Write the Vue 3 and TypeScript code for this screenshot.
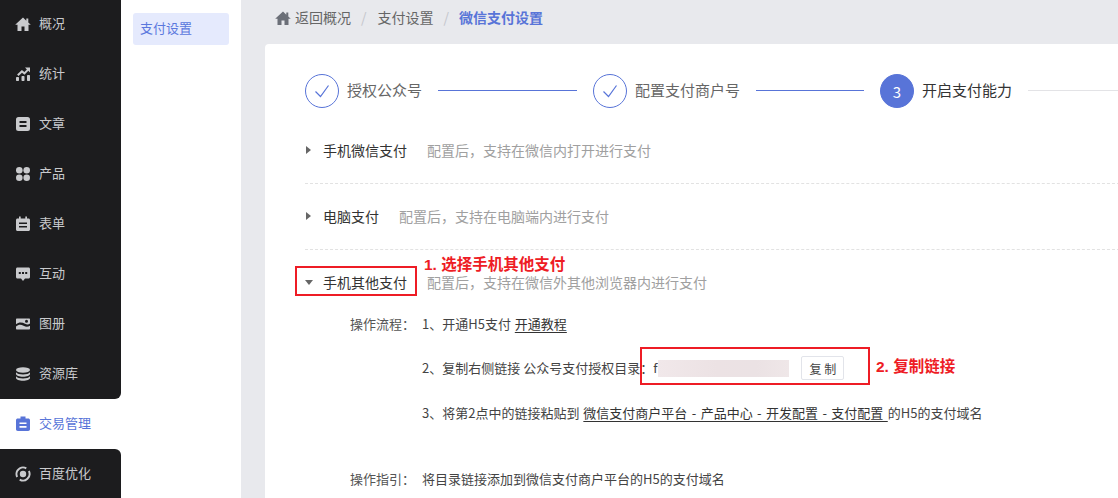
<script setup lang="ts">
interface NavItem { label: string; icon: string; active?: boolean }
const nav: NavItem[] = [
  { label: '概况', icon: 'home' },
  { label: '统计', icon: 'chart' },
  { label: '文章', icon: 'doc' },
  { label: '产品', icon: 'grid' },
  { label: '表单', icon: 'form' },
  { label: '互动', icon: 'chat' },
  { label: '图册', icon: 'image' },
  { label: '资源库', icon: 'db' },
  { label: '交易管理', icon: 'clip', active: true },
  { label: '百度优化', icon: 'baidu' },
]
const steps = [
  { label: '授权公众号', done: true, line: 139 },
  { label: '配置支付商户号', done: true, line: 108 },
  { label: '开启支付能力', done: false, line: 200 },
]
</script>

<template>
  <div class="page">
    <aside class="nav">
      <div
        v-for="item in nav"
        :key="item.label"
        class="nav-item"
        :class="{ active: item.active }"
      >
        <svg class="nav-icon" viewBox="0 0 16 16" fill="currentColor">
          <template v-if="item.icon === 'home'">
            <path d="M8 1.500 .2 8.800h2.300V15h4V10.500h3V15h4V8.800h2.300L13.300 6.500V2.500h-2v2.200z" />
          </template>
          <template v-else-if="item.icon === 'chart'">
            <path d="M10 1.500h5v5l-1.700-1.700-3.800 3.900-2.500-2-3.500 3.300-1.400-1.400 4.800-4.600 2.500 2 2.500-2.600z" />
            <rect x="1" y="11" width="3" height="4" rx=".7" />
            <rect x="6.500" y="10" width="3" height="5" rx=".7" />
            <rect x="12" y="9" width="3" height="6" rx=".7" />
          </template>
          <template v-else-if="item.icon === 'doc'">
            <path fill-rule="evenodd" d="M3.500 1h9A2.500 2.500 0 0 1 15 3.500v9a2.500 2.500 0 0 1-2.500 2.500h-9A2.500 2.500 0 0 1 1 12.500v-9A2.500 2.500 0 0 1 3.500 1zM4.500 5v2h7V5zm0 4v2h7V9z" />
          </template>
          <template v-else-if="item.icon === 'grid'">
            <circle cx="4.300" cy="4.300" r="3.300" />
            <circle cx="11.700" cy="4.300" r="3.300" />
            <circle cx="4.300" cy="11.700" r="3.300" />
            <circle cx="11.700" cy="11.700" r="3.300" />
          </template>
          <template v-else-if="item.icon === 'form'">
            <path fill-rule="evenodd" d="M4 .500h1.700V2.500h4.600V.500H12v2h1.500c.8 0 1.500.7 1.500 1.500v9.500c0 .8-.7 1.500-1.500 1.500h-11c-.8 0-1.500-.7-1.500-1.500V4c0-.8.7-1.500 1.500-1.500H4zM4 6.500V8h8V6.500zm0 3.500v1.500h8V10z" />
          </template>
          <template v-else-if="item.icon === 'chat'">
            <path fill-rule="evenodd" d="M2.500 1.500h11c.9 0 1.500.6 1.500 1.500v8c0 .9-.6 1.500-1.500 1.500H10L8 15l-2-2.500H2.500C1.600 12.500 1 11.900 1 11V3c0-.9.6-1.500 1.500-1.500zM3.800 6v2h2V6zm3.200 0v2h2V6zm3.200 0v2h2V6z" />
          </template>
          <template v-else-if="item.icon === 'image'">
            <path fill-rule="evenodd" d="M2 2.500h12c.6 0 1 .4 1 1v4c-1.500 1.300-3 1.300-5 .2-2.700-1.500-6-2-9 .5V3.500c0-.6.4-1 1-1zm9.500 1.200a1.500 1.500 0 1 0 0 3 1.500 1.500 0 0 0 0-3z" />
            <path d="M1 10.500c2.700-2.300 5-2 7.500-.7 2.500 1.400 4.500 1.300 6.500 0v2.700c0 .6-.4 1-1 1H2c-.6 0-1-.4-1-1z" />
          </template>
          <template v-else-if="item.icon === 'db'">
            <ellipse cx="8" cy="4" rx="7" ry="2.700" />
            <path d="M1 6.200c1 1.500 3.800 2.200 7 2.200s6-.7 7-2.200V8c0 1.500-3.100 2.700-7 2.700S1 9.500 1 8z" />
            <path d="M1 10.200c1 1.500 3.800 2.200 7 2.200s6-.7 7-2.200V12c0 1.500-3.100 2.700-7 2.700S1 13.500 1 12z" />
          </template>
          <template v-else-if="item.icon === 'clip'">
            <path fill-rule="evenodd" d="M5.500.500h5V2.500h2.700c1 0 1.800.7 1.800 1.700v9.100c0 1-.8 1.700-1.800 1.700H2.800c-1 0-1.800-.7-1.800-1.700V4.200c0-1 .8-1.700 1.800-1.700h2.700zM4.500 6.500V8h7V6.500zm0 3.500v1.700h7V10z" />
          </template>
          <template v-else>
            <path d="M8 .5A7.500 7.500 0 0 0 1.300 11.400l1.700-1A5.500 5.500 0 0 1 10.800 3.300l1-1.700A7.500 7.500 0 0 0 8 .5z" />
            <path d="M14.700 4.600l-1.700 1A5.500 5.500 0 0 1 5.200 12.700l-1 1.700A7.500 7.500 0 0 0 14.700 4.600z" />
            <circle cx="8" cy="8" r="3.200" />
          </template>
        </svg>
        <span class="nav-label">{{ item.label }}</span>
      </div>
    </aside>

    <aside class="sub">
      <div class="sub-item">支付设置</div>
    </aside>

    <main class="main">
      <header class="crumbs">
        <svg class="crumb-home" viewBox="0 0 16 16" fill="currentColor">
          <path d="M8 1.500 .2 8.800h2.300V15h4V10.500h3V15h4V8.800h2.300L13.300 6.500V2.500h-2v2.200z" />
        </svg>
        <span>返回概况</span>
        <i class="sep">/</i>
        <span>支付设置</span>
        <i class="sep">/</i>
        <b class="crumb-current">微信支付设置</b>
      </header>

      <section class="card">
        <div class="steps">
          <template v-for="(s, i) in steps" :key="s.label">
            <div class="circle" :class="{ current: !s.done }">
              <svg v-if="s.done" width="18" height="18" viewBox="0 0 18 18" fill="none">
                <path d="M2.500 9.500 7.500 14.500 15.500 3.500" stroke="currentColor" stroke-width="1.200" />
              </svg>
              <span v-else>{{ i + 1 }}</span>
            </div>
            <span class="step-label" :class="{ current: !s.done }">{{ s.label }}</span>
            <div class="step-line" :class="{ todo: !s.done }" :style="{ width: s.line + 'px' }"></div>
          </template>
        </div>

        <div class="pay-row dashed">
          <span class="tri right"></span>
          <span class="pay-name">手机微信支付</span>
          <span class="pay-desc">配置后，支持在微信内打开进行支付</span>
        </div>
        <div class="pay-row dashed">
          <span class="tri right"></span>
          <span class="pay-name">电脑支付</span>
          <span class="pay-desc">配置后，支持在电脑端内进行支付</span>
        </div>
        <div class="pay-row">
          <span class="tri down"></span>
          <span class="pay-name">手机其他支付</span>
          <span class="pay-desc">配置后，支持在微信外其他浏览器内进行支付</span>
          <span class="mark mark-one"></span>
          <span class="note note-one">1. 选择手机其他支付</span>
        </div>

        <div class="detail">
          <div class="detail-row first">
            <span class="detail-label">操作流程：</span>
            <span>1、开通H5支付 <u>开通教程</u></span>
          </div>
          <div class="detail-row second">
            <span class="detail-label"></span>
            <span>2、复制右侧链接 公众号支付授权目录：f</span>
            <span class="masked"></span>
            <button class="copy" type="button">复 制</button>
            <span class="mark mark-two"></span>
            <span class="note note-two">2. 复制链接</span>
          </div>
          <div class="detail-row third">
            <span class="detail-label"></span>
            <span>3、将第2点中的链接粘贴到 <u>微信支付商户平台 - 产品中心 - 开发配置 - 支付配置 </u>的H5的支付域名</span>
          </div>
          <div class="detail-row guide">
            <span class="detail-label">操作指引：</span>
            <span>将目录链接添加到微信支付商户平台的H5的支付域名</span>
          </div>
        </div>
      </section>
    </main>
  </div>
</template>

<style>
html, body { margin: 0; height: 100%; overflow: hidden; }
</style>

<style scoped>
.page {
  display: flex;
  width: 1118px;
  height: 498px;
  overflow: hidden;
  background: #e8e9ed;
  font-family: "Noto Sans CJK SC", "Liberation Sans", sans-serif;
  font-size: 13px;
  color: #444;
}
.nav {
  flex: none;
  width: 121px;
  margin-top: -1px;
  background: #fff;
}
.nav-item {
  display: flex;
  align-items: center;
  height: 50px;
  padding-left: 15px;
  box-sizing: border-box;
  background: #1c1c1e;
  color: #c9cacd;
}
.nav-item.active {
  background: #fff;
  color: #5874d8;
}
.nav-item:nth-child(8) { border-bottom-right-radius: 6px; }
.nav-item:nth-child(10) { border-top-right-radius: 6px; }
.nav-icon {
  flex: none;
  width: 16px;
  height: 16px;
  margin-right: 8px;
}
.nav-label { padding-bottom: 3px; }
.sub {
  flex: none;
  width: 120px;
  padding: 13px 12px;
  box-sizing: border-box;
  background: #fff;
}
.sub-item {
  height: 32px;
  line-height: 30px;
  padding-left: 7px;
  border-radius: 3px;
  background: #e5eafd;
  color: #5b78dd;
}
.main {
  flex: 1;
  min-width: 0;
  padding-left: 24px;
}
.crumbs {
  display: flex;
  align-items: center;
  height: 44px;
  padding: 0 0 11px 10px;
  box-sizing: border-box;
  font-size: 14px;
  color: #666;
}
.crumb-home {
  width: 16px;
  height: 16px;
  margin: 2px 4px 0 0;
  color: #6b6f78;
}
.sep {
  margin: 0 10px;
  font-style: normal;
  color: #c4c6cc;
}
.sep:first-of-type { margin-right: 11px; }
.crumb-current {
  color: #5874d8;
  font-weight: 700;
}
.card {
  width: 900px;
  height: 480px;
  padding: 30px 40px 0;
  box-sizing: border-box;
  border-radius: 4px 0 0 0;
  background: #fff;
}
.steps {
  display: flex;
  align-items: center;
  height: 34px;
  margin-bottom: 10px;
}
.circle {
  flex: none;
  display: flex;
  align-items: center;
  justify-content: center;
  width: 34px;
  height: 34px;
  box-sizing: border-box;
  border: 1px solid #5874d8;
  border-radius: 50%;
  color: #5874d8;
  font-size: 15px;
}
.circle.current {
  background: #5874d8;
  color: #fff;
}
.step-label {
  flex: none;
  margin: 0 16px 0 8px;
  font-size: 15px;
  color: #666;
  line-height: 31px;
  height: 34px;
}
.step-label.current { color: #333; }
.step-line {
  flex: none;
  height: 1px;
  margin: 0 16px 2px 0;
  background: #5874d8;
}
.step-line.todo { background: #e3e3e6; }
.pay-row {
  position: relative;
  display: flex;
  align-items: center;
  height: 66px;
  padding-bottom: 2px;
  box-sizing: border-box;
  font-size: 14px;
}
.dashed { border-bottom: 1px dashed #e2e2e2; }
.tri {
  width: 0;
  height: 0;
  border-style: solid;
  border-color: transparent;
}
.tri.right {
  margin: 0 12px 0 1px;
  border-width: 4px 0 4px 5px;
  border-left-color: #666;
}
.tri.down {
  margin: 0 10px 0 0;
  border-width: 5px 4px 0;
  border-top-color: #666;
}
.pay-name { color: #333; margin-right: 20px; }
.pay-desc { color: #a0a0a0; }
.mark {
  position: absolute;
  box-sizing: border-box;
  border: 2px solid #ee1c25;
  pointer-events: none;
}
.mark-one { left: -10px; top: 16px; width: 122px; height: 30px; }
.note {
  position: absolute;
  color: #ee1c25;
  font-size: 15.5px;
  font-weight: 700;
  line-height: 20px;
  white-space: nowrap;
  font-family: "Liberation Sans", "Noto Sans CJK SC", sans-serif;
}
.note-one { left: 119px; top: 5px; }
.detail { font-size: 13px; color: #444; }
.detail-row {
  position: relative;
  display: flex;
  align-items: center;
  padding-left: 45px;
  line-height: 18px;
  white-space: nowrap;
}
.detail-label { flex: none; width: 72px; color: #555; }
.detail-row.first { height: 16px; word-spacing: 1px; }
.detail-row.second { height: 24px; margin-top: 24px; }
.detail-row.third { height: 18px; margin-top: 24px; word-spacing: 1px; }
.detail-row.third u { word-spacing: 1.5px; }
.detail-row.guide { height: 18px; margin-top: 48px; }
.detail u { text-underline-offset: 3px; color: #333; }
.masked {
  flex: none;
  width: 131px;
  height: 17px;
  margin-left: 1px;
  background: linear-gradient(90deg, #f1e8ea, #ece2e4 45%, #ebe2e4 75%, #efe7e8);
}
.copy {
  flex: none;
  width: 43px;
  height: 24px;
  margin-left: 12px;
  padding: 0;
  border: 1px solid #e2e4ea;
  border-radius: 2px;
  background: #fff;
  color: #444;
  font: 12px "Noto Sans CJK SC", sans-serif;
}
.mark-two { left: 335px; top: -9px; width: 230px; height: 38px; }
.note-two { left: 571px; top: 1px; }
</style>
